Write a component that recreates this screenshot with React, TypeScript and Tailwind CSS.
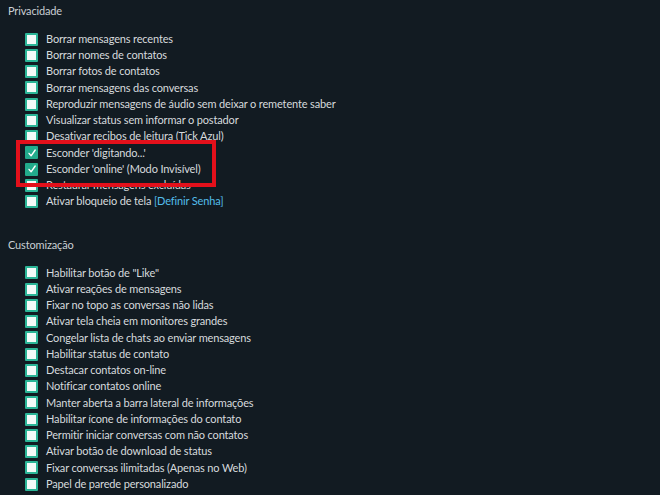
import React from "react";

const privacy: { label: string; checked?: boolean; link?: string }[] = [
  { label: "Borrar mensagens recentes" },
  { label: "Borrar nomes de contatos" },
  { label: "Borrar fotos de contatos" },
  { label: "Borrar mensagens das conversas" },
  { label: "Reproduzir mensagens de áudio sem deixar o remetente saber" },
  { label: "Visualizar status sem informar o postador" },
  { label: "Desativar recibos de leitura (Tick Azul)" },
  { label: "Esconder 'digitando...'", checked: true },
  { label: "Esconder 'online' (Modo Invisível)", checked: true },
  { label: "Restaurar mensagens excluídas" },
  { label: "Ativar bloqueio de tela", link: "[Definir Senha]" },
];

const custom = [
  'Habilitar botão de "Like"',
  "Ativar reações de mensagens",
  "Fixar no topo as conversas não lidas",
  "Ativar tela cheia em monitores grandes",
  "Congelar lista de chats ao enviar mensagens",
  "Habilitar status de contato",
  "Destacar contatos on-line",
  "Notificar contatos online",
  "Manter aberta a barra lateral de informações",
  "Habilitar ícone de informações do contato",
  "Permitir iniciar conversas com não contatos",
  "Ativar botão de download de status",
  "Fixar conversas ilimitadas (Apenas no Web)",
  "Papel de parede personalizado",
];

function Box({ checked }: { checked?: boolean }) {
  if (checked) {
    return (
      <span className="flex h-[13px] w-[13px] shrink-0 items-center justify-center rounded-[1px] bg-[#22ab8c]">
        <svg width="10" height="10" viewBox="0 0 10 10" fill="none">
          <path d="M2 5.4 L4.1 7.8 L8.2 2" stroke="#ffffff" strokeWidth="1.4" strokeLinecap="round" strokeLinejoin="round" />
        </svg>
      </span>
    );
  }
  return (
    <span className="h-[13px] w-[13px] shrink-0 rounded-[1px] border-2 border-[#2bb597] bg-[#f4fbf9]" />
  );
}

function Row({ label, checked, link }: { label: string; checked?: boolean; link?: string }) {
  return (
    <div className="flex h-[16.25px] items-center pl-[25px]">
      <Box checked={checked} />
      <span className="ml-[8px] whitespace-nowrap">
        {label}
        {link && <span className="text-[#53bdeb]"> {link}</span>}
      </span>
    </div>
  );
}

export default function App() {
  return (
    <div
      className="h-[495px] w-[660px] overflow-hidden bg-[#121b22] pt-[3px] text-[11px] tracking-[-0.15px] text-[#d6dadd]"
      style={{ fontFamily: "Lato, 'Noto Sans', sans-serif" }}
    >
      <div className="h-[16px] pl-[8px] leading-[16px] text-[#c9cfd3]">Privacidade</div>
      <div className="relative mt-[12px]">
        {privacy.map((p) => (
          <Row key={p.label} {...p} />
        ))}
        <div className="pointer-events-none absolute left-[16px] top-[109px] h-[47px] w-[200px] border-4 border-[#e3101b]" />
      </div>
      <div className="mt-[27px] h-[16px] pl-[8px] leading-[16px] text-[#c9cfd3]">Customização</div>
      <div className="mt-[12px]">
        {custom.map((c) => (
          <Row key={c} label={c} />
        ))}
      </div>
    </div>
  );
}
